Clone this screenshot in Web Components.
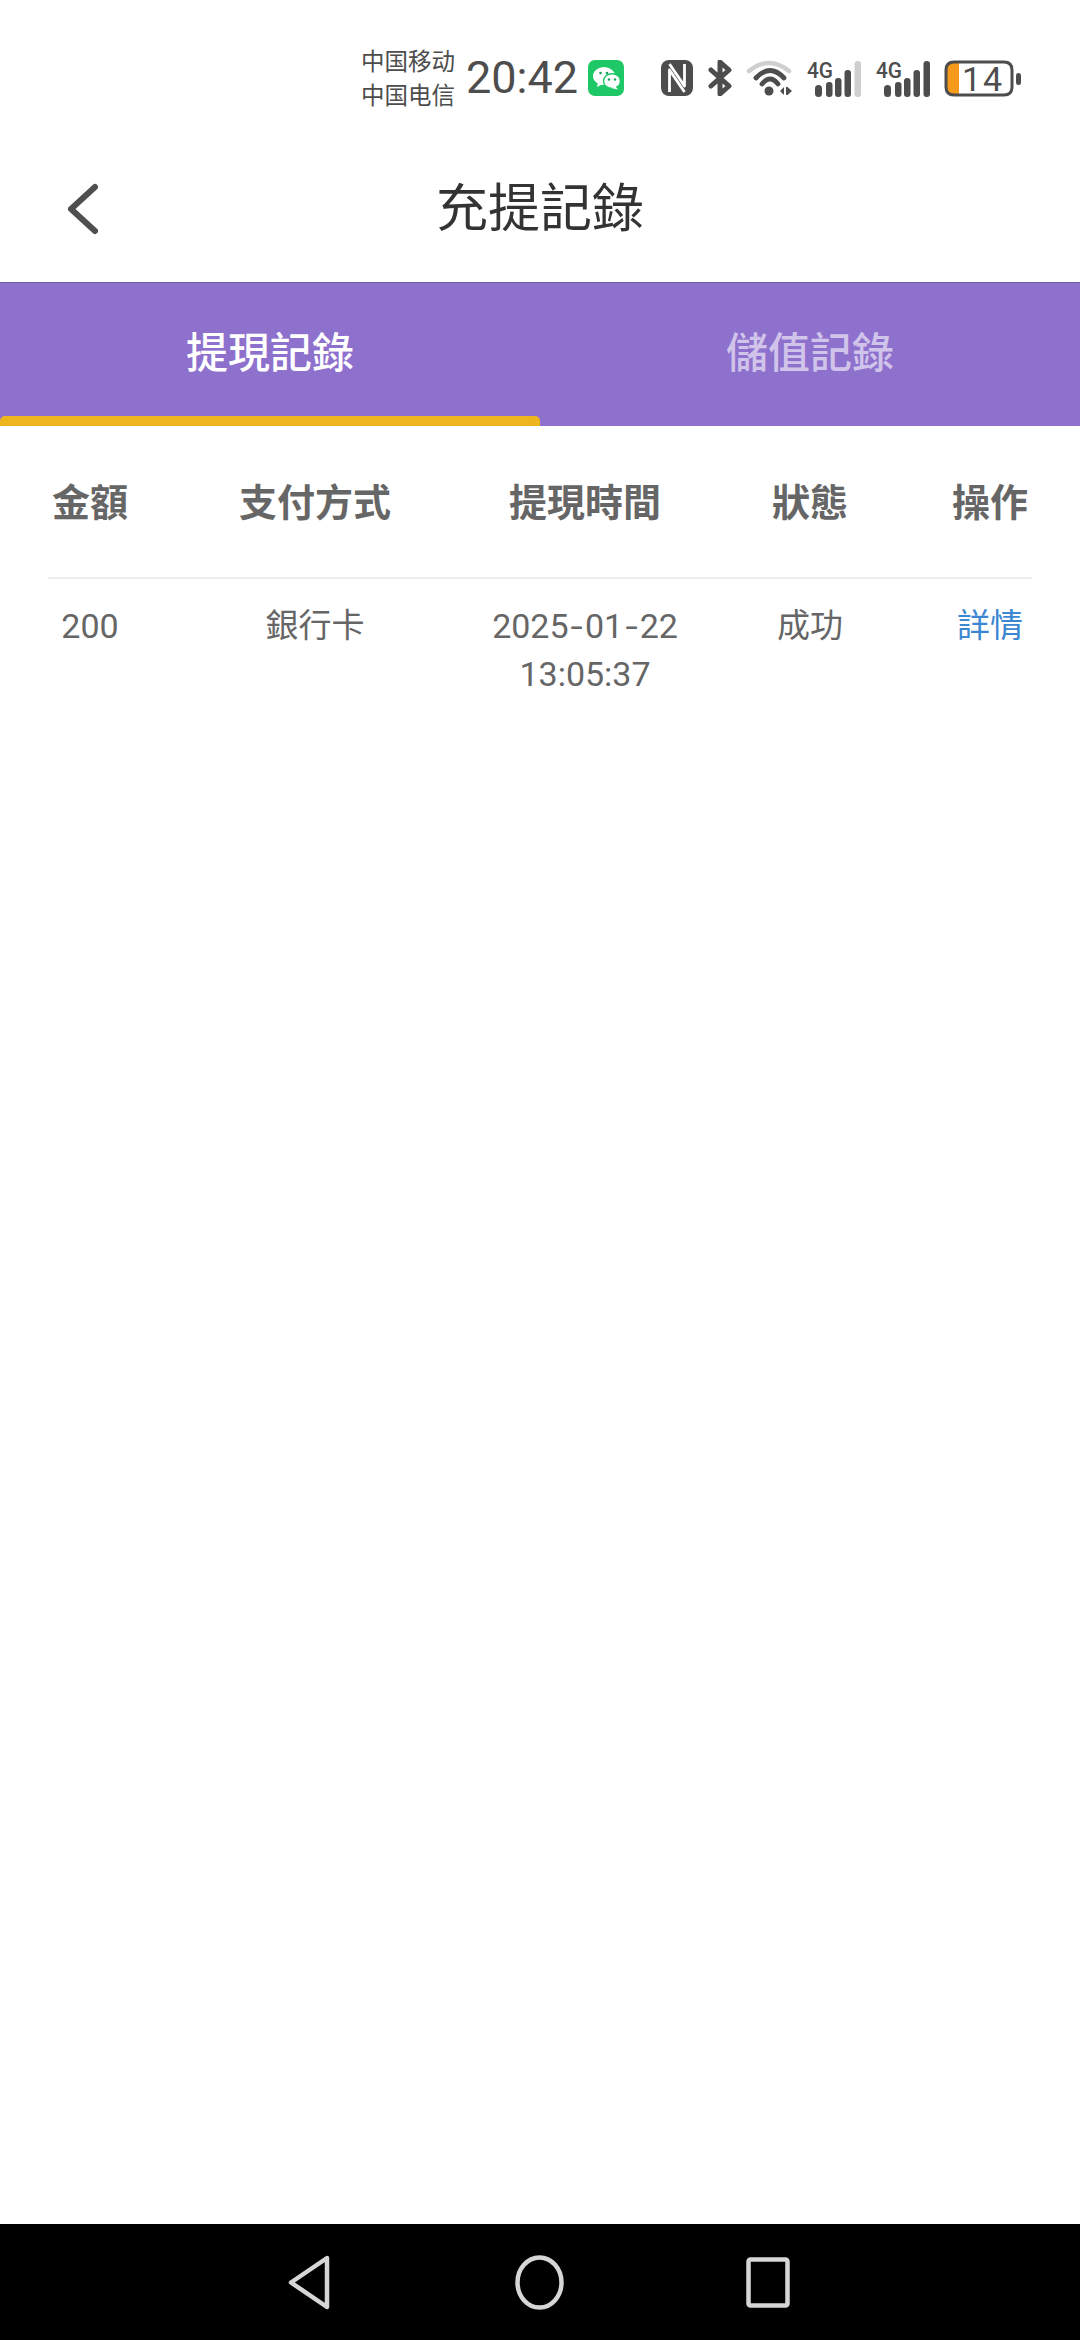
<!DOCTYPE html>
<html lang="zh-Hant">
<head>
<meta charset="utf-8">
<title>充提記錄</title>
<style>
  html, body { margin: 0; height: 100%; }
  body {
    width: 1080px;
    height: 2340px;
    display: flex;
    flex-direction: column;
    background: #fff;
    font-family: Roboto, "Noto Sans CJK TC", sans-serif;
  }
  record-table { flex: 1; }
</style>
</head>
<body>
  <status-bar></status-bar>
  <app-header>充提記錄</app-header>
  <tab-bar>
    <tab-item active>提現記錄</tab-item>
    <tab-item>儲值記錄</tab-item>
  </tab-bar>
  <record-table>
    <record-row amount="200" method="銀行卡" date="2025-01-22" time="13:05:37" state="成功" action="詳情"></record-row>
  </record-table>
  <nav-bar></nav-bar>

<script>
class StatusBar extends HTMLElement {
  constructor() {
    super();
    this.attachShadow({ mode: 'open' });
    const signal = (lastColor) => `
      <svg width="54" height="51" viewBox="0 -7 54 51">
        <text x="0" y="18" font-family="Roboto, sans-serif" font-size="22" font-weight="500" fill="#4d4d4d" textLength="26" lengthAdjust="spacingAndGlyphs">4G</text>
        <rect x="8" y="25" width="7" height="12" rx="3.500" fill="#4d4d4d"/>
        <rect x="19" y="22" width="6.500" height="15" rx="3" fill="#4d4d4d"/>
        <rect x="28" y="18" width="6.500" height="19" rx="3" fill="#4d4d4d"/>
        <rect x="37.500" y="10" width="6.500" height="27" rx="3" fill="#4d4d4d"/>
        <rect x="47.500" y="1" width="6.500" height="36" rx="3" fill="${lastColor}"/>
      </svg>`;
    this.shadowRoot.innerHTML = `
      <style>
        :host {
          display: flex;
          align-items: center;
          box-sizing: border-box;
          height: 136px;
          padding: 20px 0 0 361px;
          color: #4d4d4d;
          font-family: Roboto, "Noto Sans CJK SC", sans-serif;
        }
        .carrier { font-size: 23.5px; line-height: 34px; width: 94px; white-space: nowrap; margin-right: 11px; padding-top: 1px; }
        .time { font-size: 45px; font-weight: 400; line-height: 40px; width: 108px; margin-right: 14px; white-space: nowrap; }
        svg { display: block; flex: none; }
        .wechat { margin-right: 37px; }
        .nfc, .sig1 { margin-right: 15px; }
        .bt, .wifi, .sig2 { margin-right: 14px; }
      </style>
      <div class="carrier">中国移动<br>中国电信</div>
      <div class="time">20:42</div>
      <svg class="wechat" width="36" height="36" viewBox="0 0 36 36">
        <rect width="36" height="36" rx="7" fill="#1fc866"/>
        <ellipse cx="16" cy="16" rx="11" ry="9" fill="#fff"/>
        <path d="M10 22l-1 5 6-3z" fill="#fff"/>
        <ellipse cx="24" cy="21" rx="8.500" ry="7.300" fill="#fff" stroke="#1fc866" stroke-width="1.400"/>
        <path d="M27 26l3 3.500-7-1.500z" fill="#fff"/>
        <circle cx="12.500" cy="13" r="1.300" fill="#17a35a"/>
        <circle cx="19" cy="13" r="1.300" fill="#17a35a"/>
        <circle cx="21" cy="19.500" r="1.200" fill="#17a35a"/>
        <circle cx="27" cy="19.500" r="1.200" fill="#17a35a"/>
      </svg>
      <svg class="nfc" width="32" height="36" viewBox="0 0 32 36">
        <rect width="32" height="36" rx="8" fill="#4d4d4d"/>
        <path d="M8.500 32V10l15 22M8.500 4l15 22V4" fill="none" stroke="#fff" stroke-width="2.800" stroke-linejoin="round"/>
      </svg>
      <svg class="bt" width="24" height="36" viewBox="0 0 24 36" fill="none" stroke="#4d4d4d" stroke-width="5" stroke-linecap="round" stroke-linejoin="round">
        <path d="M3 10l18 16-9 8V2l9 8L3 26"/>
      </svg>
      <svg class="wifi" width="47" height="36" viewBox="0 0 47 36" fill="none" stroke-linecap="round">
        <path d="M3 11Q23-5 43 11" stroke="#cfcfcf" stroke-width="4.500"/>
        <path d="M10 18Q24 3 38 18" stroke="#4d4d4d" stroke-width="4.800"/>
        <path d="M16 24Q24 14 32 24" stroke="#4d4d4d" stroke-width="4.800"/>
        <circle cx="23" cy="31" r="4.500" fill="#4d4d4d"/>
        <path d="M34 31l4-4v8zM40 27h1.500l4.500 4-4.500 4H40z" fill="#4d4d4d"/>
      </svg>
      <div class="sig1">${signal('#cfcfcf')}</div>
      <div class="sig2">${signal('#4d4d4d')}</div>
      <svg width="77" height="51" viewBox="0 -7 77 51">
        <path d="M10 2h5v33h-5q-8 0-8-8V10q0-8 8-8z" fill="#f59a1b"/>
        <path d="M2 10q0-8 8-8h50q8 0 8 8v17q0 8-8 8H10q-8 0-8-8z" fill="none" stroke="#4d4d4d" stroke-width="3"/>
        <rect x="72" y="13" width="5" height="12" rx="2.500" fill="#4d4d4d"/>
        <text x="18" y="31" font-family="Roboto, sans-serif" font-size="34" fill="#4d4d4d" letter-spacing="2">14</text>
      </svg>
    `;
  }
}

class AppHeader extends HTMLElement {
  constructor() {
    super();
    this.attachShadow({ mode: 'open' });
    this.shadowRoot.innerHTML = `
      <style>
        :host {
          display: grid;
          grid-template-columns: 180px 1fr 180px;
          align-items: center;
          height: 146px;
          font-family: Roboto, "Noto Sans CJK TC", sans-serif;
        }
        .back { padding-left: 67px; }
        svg { display: block; }
        .title { text-align: center; font-size: 52px; color: #333; line-height: 60px; padding-top: 1px; }
      </style>
      <div class="back">
        <svg width="32" height="52" viewBox="0 0 32 52" fill="none" stroke="#4f4f4f" stroke-width="6" stroke-linecap="round" stroke-linejoin="round">
          <path d="M28 4L4 26l24 22"/>
        </svg>
      </div>
      <div class="title"><slot></slot></div>
    `;
  }
}

class TabBar extends HTMLElement {
  constructor() {
    super();
    this.attachShadow({ mode: 'open' });
    this.shadowRoot.innerHTML = `
      <style>
        :host {
          display: flex;
          box-sizing: border-box;
          height: 144px;
          background: #8e70cd;
          border-top: 1px solid #6f59a3;
        }
      </style>
      <slot></slot>
    `;
  }
}

class TabItem extends HTMLElement {
  constructor() {
    super();
    this.attachShadow({ mode: 'open' });
    this.shadowRoot.innerHTML = `
      <style>
        :host {
          flex: 1;
          display: flex;
          flex-direction: column;
          color: rgba(255, 255, 255, 0.6);
          font-size: 42px;
          font-weight: 500;
          font-family: Roboto, "Noto Sans CJK TC", sans-serif;
        }
        :host([active]) { color: #fff; }
        .label { flex: 1; display: flex; align-items: center; justify-content: center; padding-bottom: 1px; }
        .bar { height: 10px; border-radius: 5px 5px 0 0; }
        :host([active]) .bar { background: #ecb61c; }
      </style>
      <div class="label"><slot></slot></div>
      <div class="bar"></div>
    `;
  }
}

const RECORD_COLUMNS = '84px 286px 174px 196px 84px';

class RecordTable extends HTMLElement {
  constructor() {
    super();
    this.attachShadow({ mode: 'open' });
    this.shadowRoot.innerHTML = `
      <style>
        :host {
          display: block;
          padding: 0 48px;
          color: #666;
          font-family: Roboto, "Noto Sans CJK TC", sans-serif;
        }
        .head {
          display: grid;
          grid-template-columns: ${RECORD_COLUMNS};
          column-gap: 40px;
          align-items: center;
          justify-items: center;
          box-sizing: border-box;
          height: 153px;
          padding-bottom: 5px;
          border-bottom: 2px solid #eee;
          font-size: 38px;
          font-weight: 700;
          white-space: nowrap;
        }
      </style>
      <div class="head">
        <span>金額</span><span>支付方式</span><span>提現時間</span><span>狀態</span><span>操作</span>
      </div>
      <slot></slot>
    `;
  }
}

class RecordRow extends HTMLElement {
  connectedCallback() {
    if (this.shadowRoot) return;
    this.attachShadow({ mode: 'open' });
    const get = (name) => this.getAttribute(name) || '';
    // the hyphens of the date are wider in the reference font
    const date = get('date').replace(/-/g, '<span class="dash">-</span>');
    this.shadowRoot.innerHTML = `
      <style>
        :host {
          display: grid;
          grid-template-columns: ${RECORD_COLUMNS};
          column-gap: 40px;
          justify-items: center;
          padding-top: 23px;
          font-size: 33px;
          line-height: 48px;
          color: #666;
          white-space: nowrap;
        }
        .num { font-size: 34px; }
        .date { display: flex; flex-direction: column; align-items: center; }
        .dash { display: inline-block; margin: 0 3.5px; transform: scaleX(1.3); }
        .action { color: #3b87d1; }
      </style>
      <span class="num">${get('amount')}</span>
      <span>${get('method')}</span>
      <div class="date num"><span>${date}</span><span>${get('time')}</span></div>
      <span>${get('state')}</span>
      <span class="action">${get('action')}</span>
    `;
  }
}

class NavBar extends HTMLElement {
  constructor() {
    super();
    this.attachShadow({ mode: 'open' });
    this.shadowRoot.innerHTML = `
      <style>
        :host {
          display: flex;
          align-items: center;
          box-sizing: border-box;
          height: 116px;
          padding-left: 288px;
          background: #000;
        }
        svg { display: block; flex: none; }
        .tri { margin-right: 185px; }
        .dot { margin-right: 182px; }
      </style>
      <svg class="tri" width="42" height="55" viewBox="0 0 42 55" fill="none" stroke="#d6d6d6" stroke-width="4.500" stroke-linejoin="round">
        <path d="M39 3L3 27.500 39 52z"/>
      </svg>
      <svg class="dot" width="49" height="55" viewBox="0 0 49 55" fill="none" stroke="#d6d6d6" stroke-width="4.500">
        <ellipse cx="24.500" cy="27.500" rx="22" ry="25"/>
      </svg>
      <svg width="44" height="51" viewBox="0 0 44 51" fill="none" stroke="#d6d6d6" stroke-width="4.500" stroke-linejoin="round">
        <rect x="2.500" y="2.500" width="39" height="46" rx="2"/>
      </svg>
    `;
  }
}

customElements.define('status-bar', StatusBar);
customElements.define('app-header', AppHeader);
customElements.define('tab-bar', TabBar);
customElements.define('tab-item', TabItem);
customElements.define('record-table', RecordTable);
customElements.define('record-row', RecordRow);
customElements.define('nav-bar', NavBar);
</script>
</body>
</html>
